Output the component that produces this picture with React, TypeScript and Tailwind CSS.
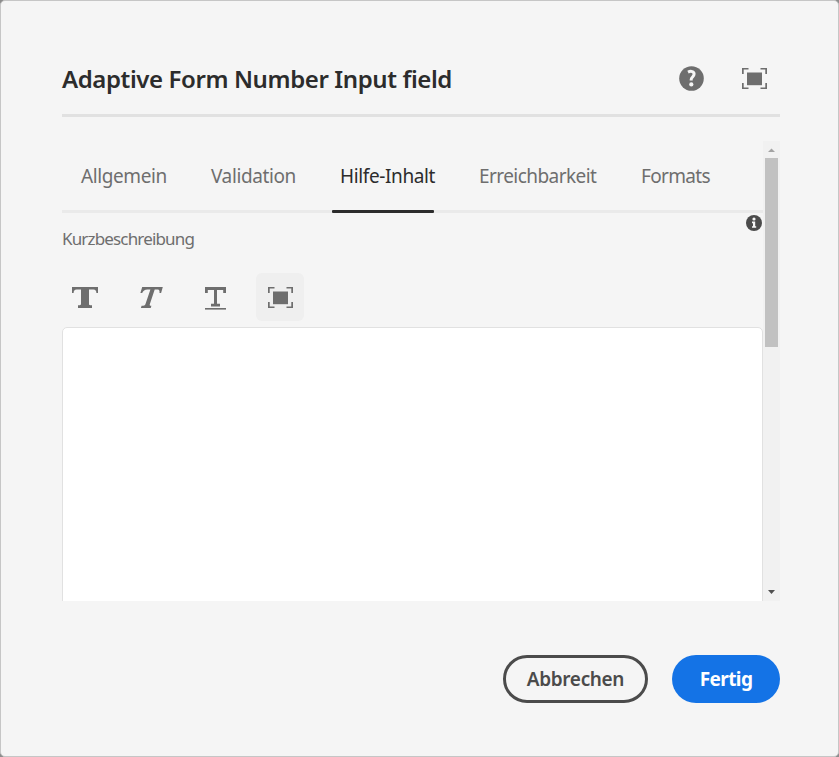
import type { ReactNode } from 'react';

const tabs = [
  { label: 'Allgemein', style: 'w-[86px] tracking-[-0.4px]' },
  { label: 'Validation', style: 'w-[85px] tracking-[-0.4px]' },
  { label: 'Hilfe-Inhalt', style: 'w-[95px] tracking-[-0.38px]', active: true },
  { label: 'Erreichbarkeit', style: 'w-[118px] tracking-[-0.56px]' },
  { label: 'Formats', style: 'w-[70px] tracking-[-0.68px]' },
];

function FullScreenIcon() {
  return (
    <svg width="26" height="22" viewBox="0 0 26 22" fill="#6e6e6e" aria-hidden="true">
      <rect x="5" y="4.5" width="15" height="12.7" />
      <path d="M0 0h6.5v1.5H1.7V6H0zM18.5 0H25v6h-1.7V1.5h-4.8zM0 15h1.7v4.5h4.8V21H0zM23.3 15H25v6h-6.5v-1.5h4.8z" />
    </svg>
  );
}

function HelpIcon() {
  return (
    <svg width="25" height="25" viewBox="0 0 25 25" aria-hidden="true">
      <circle cx="12.5" cy="12.5" r="12.3" fill="#6e6e6e" />
      <path d="M9 6.100c3-1.500 6.200-.6 6.100 2 0 2.600-2.900 3.100-2.900 5.400v1" fill="none" stroke="#f5f5f5" strokeWidth="3" />
      <circle cx="12.300" cy="18.400" r="2.100" fill="#f5f5f5" />
    </svg>
  );
}

function InfoIcon() {
  return (
    <svg width="16" height="16" viewBox="0 0 16 16" aria-hidden="true">
      <circle cx="8" cy="8" r="8" fill="#4b4b4b" />
      <circle cx="8" cy="4" r="1.6" fill="#f5f5f5" />
      <path d="M6 6.6h3.2v4.6h1v1.6H6v-1.6h1V8.2H6z" fill="#f5f5f5" />
    </svg>
  );
}

function BoldIcon() {
  return (
    <svg width="26" height="22" viewBox="0 0 26 22" fill="#6e6e6e" aria-hidden="true">
      <path d="M0 0h26v6h-1.600c0-2-.9-3.500-3-3.500H17V17c0 .8.500 1.200 1.300 1.200H20V21H6v-2.800h1.700c.9 0 1.300-.4 1.300-1.200V2.500H4.600C2.500 2.500 1.600 4 1.600 6H0z" />
    </svg>
  );
}

function ItalicIcon() {
  return (
    <svg width="24" height="22" viewBox="0 0 24 22" fill="#6e6e6e" aria-hidden="true">
      <path d="M2.200 0H22.800l-1.700 6h-1.600c.3-2.300-.2-3.600-1.700-3.600h-3.100L9.800 17.200c-.3 1 .1 1.500 1.600 1.500l-.7 2.300H.9l.7-2.300c2.300 0 3.400-.3 3.800-1.500l5-14.800H7.500C4.600 2.400 3.200 3.700 2.200 6H.4z" />
    </svg>
  );
}

function UnderlineIcon() {
  return (
    <svg width="21" height="23" viewBox="0 0 21 23" fill="#6e6e6e" aria-hidden="true">
      <path d="M0 0h21v6h-2.800V2.900H12V16.700h3v2.800H6v-2.800h3V2.900H2.800V6H0z" />
      <rect y="21" width="21" height="1.600" />
    </svg>
  );
}

function ToolButton({ label, pad, active, children }: { label: string; pad: string; active?: boolean; children: ReactNode }) {
  return (
    <button aria-label={label} className={`flex h-12 w-12 items-start rounded-md ${pad} ${active ? 'bg-[#efefef]' : ''}`}>
      {children}
    </button>
  );
}

export default function App() {
  return (
    <div className="h-[757px] w-[839px] overflow-hidden bg-[#8c8c8c] font-['Noto_Sans','Open_Sans',sans-serif]">
      <main className="flex h-full flex-col rounded-[5px] border border-[#c6c6c6] bg-[#f5f5f5] px-[61px]">
        <header className="mt-[53px] flex h-[63px] w-[718px] shrink-0 items-start border-b-[3px] border-[#e1e1e1]">
          <h1 className="mt-[7px] whitespace-nowrap text-[24px] leading-[36px] font-semibold tracking-[-0.4px] text-[#2c2c2c]">
            Adaptive Form Number Input field
          </h1>
          <div className="ml-auto mr-[12px] mt-[12px] flex items-start gap-[38px]">
            <button aria-label="Hilfe"><HelpIcon /></button>
            <button aria-label="Vollbild" className="mt-[2px]"><FullScreenIcon /></button>
          </div>
        </header>

        <div className="mt-[24px] flex h-[460px] w-[718px] shrink-0 overflow-hidden">
          <section className="flex w-[701px] shrink-0 flex-col">
            <nav className="flex h-[72px] shrink-0 gap-[44px] border-b-[3px] border-[#eaeaea] pl-[19px]">
              {tabs.map((t) => (
                <div key={t.label} className={`flex h-[72px] shrink-0 flex-col whitespace-nowrap ${t.style}`}>
                  <span className={`mt-[20px] text-[19px] leading-[30px] ${t.active ? 'text-[#2c2c2c]' : 'text-[#6e6e6e]'}`}>
                    {t.label}
                  </span>
                  {t.active && <span className="-ml-[8px] mt-auto h-[3px] w-[102px] rounded-[1px] bg-[#2c2c2c]" />}
                </div>
              ))}
            </nav>
            <div className="flex h-[60px] shrink-0 items-start justify-between pr-px">
              <label className="mt-[13px] whitespace-nowrap text-[17px] leading-[26px] tracking-[-0.84px] text-[#6e6e6e]">
                Kurzbeschreibung
              </label>
              <span className="mt-[1.500px]"><InfoIcon /></span>
            </div>
            <div className="flex h-[54px] shrink-0 gap-[18px]">
              <ToolButton label="Fett" pad="pl-[10px] pt-[14px]"><BoldIcon /></ToolButton>
              <ToolButton label="Kursiv" pad="pl-[12px] pt-[14px]"><ItalicIcon /></ToolButton>
              <ToolButton label="Unterstrichen" pad="pl-[11px] pt-[14px]"><UnderlineIcon /></ToolButton>
              <div className="-ml-1">
                <ToolButton label="Vollbild" pad="pl-[12px] pt-[14px]" active><FullScreenIcon /></ToolButton>
              </div>
            </div>
            <div className="h-[300px] shrink-0 rounded-[5px] border border-[#e1e1e1] bg-white" />
          </section>
          <div className="flex w-[17px] shrink-0 flex-col items-center bg-[#f1f1f1]">
            <svg width="17" height="17" viewBox="0 0 17 17" aria-hidden="true"><path d="M5 11h7L8.500 7.500z" fill="#a3a3a3" /></svg>
            <div className="h-[189px] w-[13px] bg-[#c1c1c1]" />
            <svg className="mt-auto" width="17" height="17" viewBox="0 0 17 17" aria-hidden="true"><path d="M5 6h7L8.500 10z" fill="#505050" /></svg>
          </div>
        </div>

        <footer className="mt-[54px] flex w-[718px] shrink-0 justify-end gap-6 text-[19px] font-semibold">
          <button className="flex h-12 w-[145px] items-center justify-center rounded-full border-[3px] border-[#4b4b4b] tracking-[-0.35px] text-[#4b4b4b]">
            Abbrechen
          </button>
          <button className="flex h-12 w-[108px] items-center justify-center rounded-full bg-[#1473e6] font-bold tracking-[-0.6px] text-white">
            Fertig
          </button>
        </footer>
      </main>
    </div>
  );
}
